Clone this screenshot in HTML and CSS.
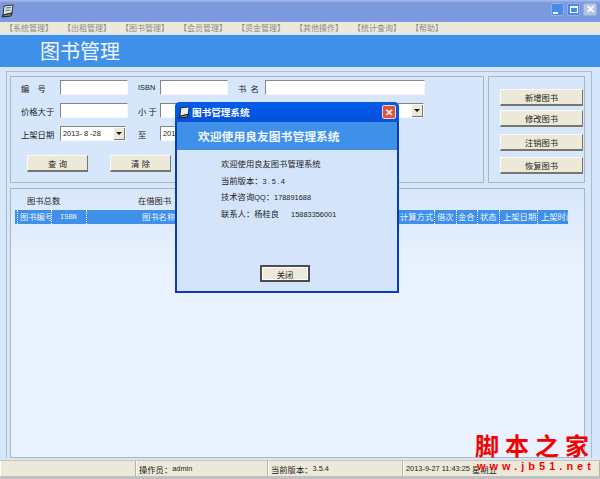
FILE: index.html
```html
<!DOCTYPE html>
<html lang="zh-CN">
<head>
  <meta charset="UTF-8">
  <title>图书管理</title>
  <link rel="stylesheet" href="styles.css">
</head>
<body>
  <div class="app">
    <div class="titlebar">
      <svg class="app-icon" width="14" height="14" viewBox="0 0 14 14">
        <path d="M3 2 L12 1 L11 9 L2 11 Z" fill="#dfe6dc" stroke="#333" stroke-width="1"/>
        <path d="M2 11 L1 13 L10 12 L11 9 Z" fill="#7d8a80" stroke="#222" stroke-width="1"/>
        <path d="M5 4 L10 3.5 M4.5 6.5 L9.5 6" stroke="#4a7a9a" stroke-width="1"/>
      </svg>
      <div class="win-btns">
        <span class="win-btn"><i class="glyph-min"></i></span>
        <span class="win-btn"><i class="glyph-max"></i></span>
        <span class="win-btn win-close">✕</span>
      </div>
    </div>

    <div class="menu">
      <span>【系统管理】</span>
      <span>【出租管理】</span>
      <span>【图书管理】</span>
      <span>【会员管理】</span>
      <span>【资金管理】</span>
      <span>【其他操作】</span>
      <span>【统计查询】</span>
      <span>【帮助】</span>
    </div>

    <div class="header">图书管理</div>

    <div class="main">
      <div class="outer">
        <div class="top-row">
          <div class="panel search">
            <div class="form-grid">
              <label class="spaced">编 号</label>
              <input type="text" class="field">
              <label class="col-b num">ISBN</label>
              <input type="text" class="field">
              <label class="col-c spaced-sm">书 名</label>
              <input type="text" class="field">

              <label>价格大于</label>
              <input type="text" class="field">
              <label class="col-b">小 于</label>
              <input type="text" class="field">
              <label class="col-c"></label>
              <div class="date wide"><span></span><i class="arrow"></i></div>

              <label>上架日期</label>
              <div class="date"><span>2013- 8 -28</span><i class="arrow"></i></div>
              <label class="col-b">至</label>
              <div class="date"><span>2013- 9 -27</span><i class="arrow"></i></div>
            </div>
            <div class="search-btns">
              <button class="btn">查 询</button>
              <button class="btn">清 除</button>
            </div>
          </div>
          <div class="panel actions">
            <button class="btn">新增图书</button>
            <button class="btn">修改图书</button>
            <button class="btn">注销图书</button>
            <button class="btn">恢复图书</button>
          </div>
        </div>

        <div class="panel books">
          <div class="totals">
            <span class="total-a">图书总数</span>
            <span>在借图书</span>
          </div>
          <div class="grid-head">
            <span class="c-no">图书编号</span>
            <span class="c-isbn">ISBN</span>
            <span class="c-name">图书名称</span>
            <span class="c-calc">计算方式</span>
            <span class="c-times">借次</span>
            <span class="c-sum">金合</span>
            <span class="c-state">状态</span>
            <span class="c-date">上架日期</span>
            <span class="c-time">上架时间</span>
          </div>
        </div>
      </div>
    </div>

    <div class="status">
      <span class="s1"></span>
      <span class="s2">操作员：<b class="num">admin</b></span>
      <span class="s3">当前版本：<b class="num">3.5.4</b></span>
      <span class="s4"><b class="num">2013-9-27 11:43:25</b><em>星期五</em></span>
    </div>
    <div class="bottom-edge"></div>
  </div>

  <div class="dialog">
    <div class="dialog-title">
      <svg width="13" height="13" viewBox="0 0 14 14">
        <path d="M3 2 L12 1 L11 9 L2 11 Z" fill="#e8eef2" stroke="#222" stroke-width="1"/>
        <path d="M2 11 L1 13 L10 12 L11 9 Z" fill="#8a96a0" stroke="#111" stroke-width="1"/>
      </svg>
      <span>图书管理系统</span>
      <span class="dialog-close">✕</span>
    </div>
    <div class="dialog-head">欢迎使用良友图书管理系统</div>
    <div class="dialog-body">
      <p>欢迎使用良友图书管理系统</p>
      <p>当前版本：<span class="num ver">3.5.4</span></p>
      <p>技术咨询<span class="num">QQ</span>：<span class="num">178891688</span></p>
      <p>联系人：杨桂良<span class="num phone">15883356001</span></p>
    </div>
    <div class="dialog-foot"><button class="close-btn">关闭</button></div>
  </div>

  <div class="watermark">
    <div class="wm-big">脚本之家</div>
    <div class="wm-small">www.jb51.net</div>
  </div>
</body>
</html>
```

FILE: styles.css
```css
* {
  box-sizing: border-box;
}
body {
  margin: 0;
  width: 600px;
  height: 479px;
  overflow: hidden;
  font-family: "Liberation Sans", "Noto Sans CJK SC", sans-serif;
  font-size: 8.3px;
  color: #222;
  background-color: #c0c0c0;
}
.app {
  display: flex;
  flex-direction: column;
  height: 479px;
}
.num {
  font-size: 7.4px;
  font-weight: normal;
}

/* window frame */
.titlebar {
  height: 22px;
  display: flex;
  align-items: center;
  justify-content: space-between;
  padding: 0 3px 3px 1px;
  background: linear-gradient(#a8bdeb 0, #7c98dc 3px, #7b9ae0 100%);
}
.app-icon {
  margin-top: 2px;
}
.win-btns {
  display: flex;
  gap: 3px;
}
.win-btn {
  width: 13px;
  height: 13px;
  display: flex;
  align-items: center;
  justify-content: center;
  background-color: #4a8ae8;
  border: 1px solid #8db0ea;
  border-radius: 2px;
  color: #fff;
}
.glyph-min {
  width: 5px;
  height: 2px;
  background: #fff;
  margin: 6px 4px 0 0;
}
.glyph-max {
  width: 8px;
  height: 7px;
  border: 1px solid #fff;
  border-top-width: 2px;
}
.win-close {
  width: 14px;
  background-color: #b4c3e0;
  font-size: 11px;
  font-weight: bold;
}
.menu {
  height: 11px;
  display: flex;
  gap: 10px;
  align-items: center;
  padding-left: 5px;
  background-color: #ece9d8;
  color: #8b8b85;
  font-size: 8px;
  font-family: "Noto Sans CJK SC", sans-serif;
}
.header {
  height: 34px;
  padding: 1px 0 0 40px;
  border-top: 2px solid #dbe6f5;
  background-color: #3f90e8;
  color: #f2f7ff;
  font-size: 20px;
  line-height: 30px;
  font-family: "Noto Sans CJK SC", sans-serif;
}
.main {
  flex: 1;
  padding: 4px 8px 2px 6px;
  background-color: #d6e6fb;
  min-height: 0;
  display: flex;
}
.outer {
  flex: 1;
  min-width: 0;
  display: flex;
  flex-direction: column;
  gap: 5px;
  padding: 4px 6px 0 3px;
  border: 1px solid #aebccb;
  border-bottom: 0;
}
.top-row {
  display: flex;
  gap: 4px;
  height: 107px;
}
.panel {
  border: 1px solid #adb5bd;
}

/* search form */
.search {
  width: 474px;
  padding: 3px 0 0 10px;
}
.form-grid {
  display: grid;
  grid-template-columns: 39px 68px 10px 22px 68px 10px 27px 160px;
  grid-auto-rows: 15px;
  row-gap: 8px;
  align-items: center;
}
.form-grid label {
  white-space: pre;
}
.form-grid label.spaced {
  word-spacing: 6px;
}
.form-grid label.spaced-sm {
  word-spacing: 2px;
}
.col-b {
  grid-column: 4;
}
.col-c {
  grid-column: 7;
}
.field {
  height: 15px;
  width: 100%;
  padding: 0;
  background: #fff;
  border: 1px solid #f4f8fe;
  border-top: 1px solid #858585;
  border-left: 1px solid #858585;
}
.date {
  height: 15px;
  width: 66px;
  display: flex;
  justify-content: space-between;
  align-items: center;
  padding: 1px 0 1px 2px;
  background: #fff;
  border: 1px solid #f4f8fe;
  border-top: 1px solid #858585;
  border-left: 1px solid #858585;
  font-size: 7.4px;
  white-space: nowrap;
}
.date.wide {
  width: 159px;
}
.arrow {
  width: 11px;
  height: 12px;
  display: flex;
  align-items: center;
  justify-content: center;
  background-color: #ece9d8;
  border-right: 1px solid #777;
  border-bottom: 1px solid #777;
}
.arrow::after {
  content: "";
  border-left: 3px solid transparent;
  border-right: 3px solid transparent;
  border-top: 3px solid #111;
}
.search-btns {
  display: flex;
  gap: 22px;
  margin: 14px 0 0 6px;
}
.btn {
  height: 17px;
  padding: 0;
  background-color: #ece9d8;
  border: 1px solid #fbfaf4;
  border-right: 1px solid #77766e;
  border-bottom: 2px solid #77766e;
  color: #222;
  font: inherit;
}
.search-btns .btn {
  width: 61px;
}

/* buttons on the right */
.actions {
  width: 97px;
  display: flex;
  flex-direction: column;
  padding: 12px 0 0 11px;
}
.actions .btn {
  width: 83px;
  flex: none;
}
.actions .btn:nth-child(2) {
  margin-top: 4px;
}
.actions .btn:nth-child(3) {
  margin-top: 7px;
}
.actions .btn:nth-child(4) {
  margin-top: 6px;
}

/* book list */
.books {
  flex: 1;
  padding: 0 16px 0 4px;
  background: linear-gradient(#d8e7fb, #e9f2fe 30%);
}
.totals {
  height: 21px;
  display: flex;
  align-items: flex-end;
  padding: 0 0 4px 12px;
}
.total-a {
  width: 111px;
}
.grid-head {
  height: 14px;
  display: flex;
  align-items: center;
  background-color: #3f90e8;
  color: #eef5ff;
  white-space: nowrap;
  overflow: hidden;
}
.grid-head span {
  flex: none;
  height: 100%;
  line-height: 14px;
  overflow: hidden;
  border-right: 1px dotted #fff;
}
.c-no {
  width: 35px;
  padding-left: 2px;
  border-left: 1px dotted #fff;
  margin-left: 2px;
}
.c-isbn {
  width: 35px;
  padding-left: 8px;
  font-family: "Liberation Mono", monospace;
  font-size: 7px;
}
.c-name {
  width: 312px;
  padding-left: 55px;
}
.c-calc {
  width: 36px;
  padding-left: 1px;
}
.c-times {
  width: 22px;
  padding-left: 2px;
}
.c-sum {
  width: 21px;
  padding-left: 1px;
}
.c-state {
  width: 22px;
  padding-left: 2px;
}
.c-date {
  width: 38px;
  padding-left: 3px;
}
.grid-head .c-time {
  width: 30px;
  padding-left: 3px;
  border-right: 0;
}

/* status bar */
.status {
  height: 16px;
  display: flex;
  background-color: #ece9d8;
  border-top: 1px solid #c9c7b8;
}
.status span {
  display: flex;
  align-items: center;
  padding-left: 2px;
  border-right: 1px solid #b5b3a4;
  border-left: 1px solid #fff;
}
.s1 {
  width: 136px;
}
.s2 {
  width: 132px;
}
.s3 {
  width: 135px;
}
.s4 {
  flex: 1;
  gap: 2px;
}
.s4 em {
  font-style: normal;
}
.bottom-edge {
  height: 3px;
  background-color: #c0c0c0;
}

/* about dialog */
.dialog {
  position: absolute;
  left: 175px;
  top: 102px;
  width: 224px;
  height: 191px;
  display: flex;
  flex-direction: column;
  background-color: #d4e5fb;
  border: 2px solid #0a3cb8;
  border-top: 0;
  border-radius: 5px 5px 0 0;
}
.dialog-title {
  height: 20px;
  flex: none;
  display: flex;
  align-items: center;
  gap: 1px;
  margin: 0 -2px;
  padding-left: 3px;
  color: #fff;
  font-size: 9.6px;
  font-weight: bold;
  background: linear-gradient(#0a5fe0, #0058e8 40%, #0a50d8);
  border-radius: 5px 5px 0 0;
}
.dialog-close {
  width: 14px;
  height: 14px;
  margin-left: auto;
  margin-right: 3px;
  display: flex;
  align-items: center;
  justify-content: center;
  background-color: #e0543c;
  border: 1px solid #f4d8d0;
  border-radius: 2px;
  font-size: 10px;
}
.dialog-head {
  height: 28px;
  flex: none;
  padding-left: 21px;
  background-color: #3f90e8;
  color: #eef5ff;
  font-size: 11.8px;
  font-weight: bold;
  line-height: 27px;
  font-family: "Noto Sans CJK SC", sans-serif;
}
.dialog-body {
  padding: 6px 0 0 44px;
  flex: 1;
}
.dialog-body p {
  margin: 0;
  height: 16.5px;
  line-height: 16.5px;
}
.ver {
  letter-spacing: 1.5px;
}
.phone {
  margin-left: 12px;
}
.dialog-foot {
  display: flex;
  justify-content: center;
  padding: 0 4px 9px 0;
}
.close-btn {
  width: 50px;
  height: 17px;
  padding: 0;
  background-color: #ece9d8;
  border: 2px solid #4d4d4d;
  box-shadow: inset 0 0 0 1px #fff;
  color: #222;
  font: inherit;
}

/* site watermark */
.watermark {
  position: absolute;
  left: 475px;
  top: 430px;
  width: 122px;
  color: #f40000;
  font-family: "Noto Sans CJK SC", sans-serif;
}
.wm-big {
  font-size: 24px;
  font-weight: bold;
  line-height: 30px;
  letter-spacing: 6px;
  white-space: nowrap;
}
.wm-small {
  font-family: "Liberation Sans", sans-serif;
  font-size: 11px;
  font-weight: bold;
  line-height: 12px;
  letter-spacing: 4px;
  padding-left: 2px;
  white-space: nowrap;
  text-shadow: 0 0 1px #fff;
}
```
